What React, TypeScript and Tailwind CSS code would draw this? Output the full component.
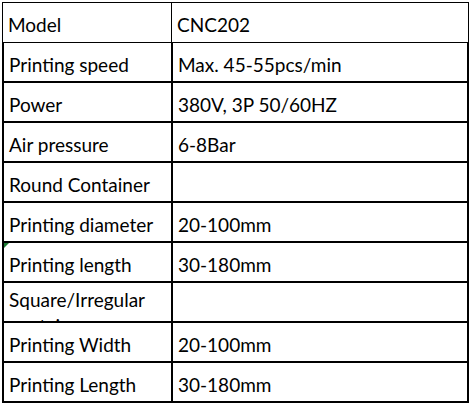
const rows: [string, string][] = [
  ["Model", "CNC202"],
  ["Printing speed", "Max. 45-55pcs/min"],
  ["Power", "380V, 3P 50/60HZ"],
  ["Air pressure", "6-8Bar"],
  ["Round Container", ""],
  ["Printing diameter", "20-100mm"],
  ["Printing length", "30-180mm"],
  ["Square/Irregular container", ""],
  ["Printing Width", "20-100mm"],
  ["Printing Length", "30-180mm"],
]

export default function App() {
  return (
    <div
      className="w-[473px] h-[407px] bg-white pt-[2px] pl-[2px] text-black text-[19px] overflow-hidden"
      style={{ fontFamily: "Lato, 'Liberation Sans', sans-serif" }}
    >
      <div className="w-[467px]">
        {rows.map(([label, value], i) => {
          const first = i === 0
          return (
            <div
              key={label}
              className={
                first
                  ? "flex h-[41px] border-y border-x border-black box-border"
                  : "flex h-[40px] border-b-2 border-x-2 border-black box-border"
              }
            >
              <div
                className={
                  "relative w-[169px] shrink-0 overflow-hidden border-black " +
                  (first ? "border-r" : "border-r-2")
                }
              >
                {label === "Printing length" && (
                  <div className="absolute left-0 top-0 w-0 h-0 border-t-[5px] border-r-[5px] border-t-[#1e7b34] border-r-transparent" />
                )}
                {label.startsWith("Square") ? (
                  <div className="pl-[5px] pt-[4px] leading-[26px] w-[155px]">{label}</div>
                ) : (
                  <div className="flex h-full items-center pl-[5px] pt-[4px] leading-none">{label}</div>
                )}
              </div>
              <div className="flex flex-1 items-center pl-[5px] pt-[4px] leading-none">{value}</div>
            </div>
          )
        })}
      </div>
    </div>
  )
}
